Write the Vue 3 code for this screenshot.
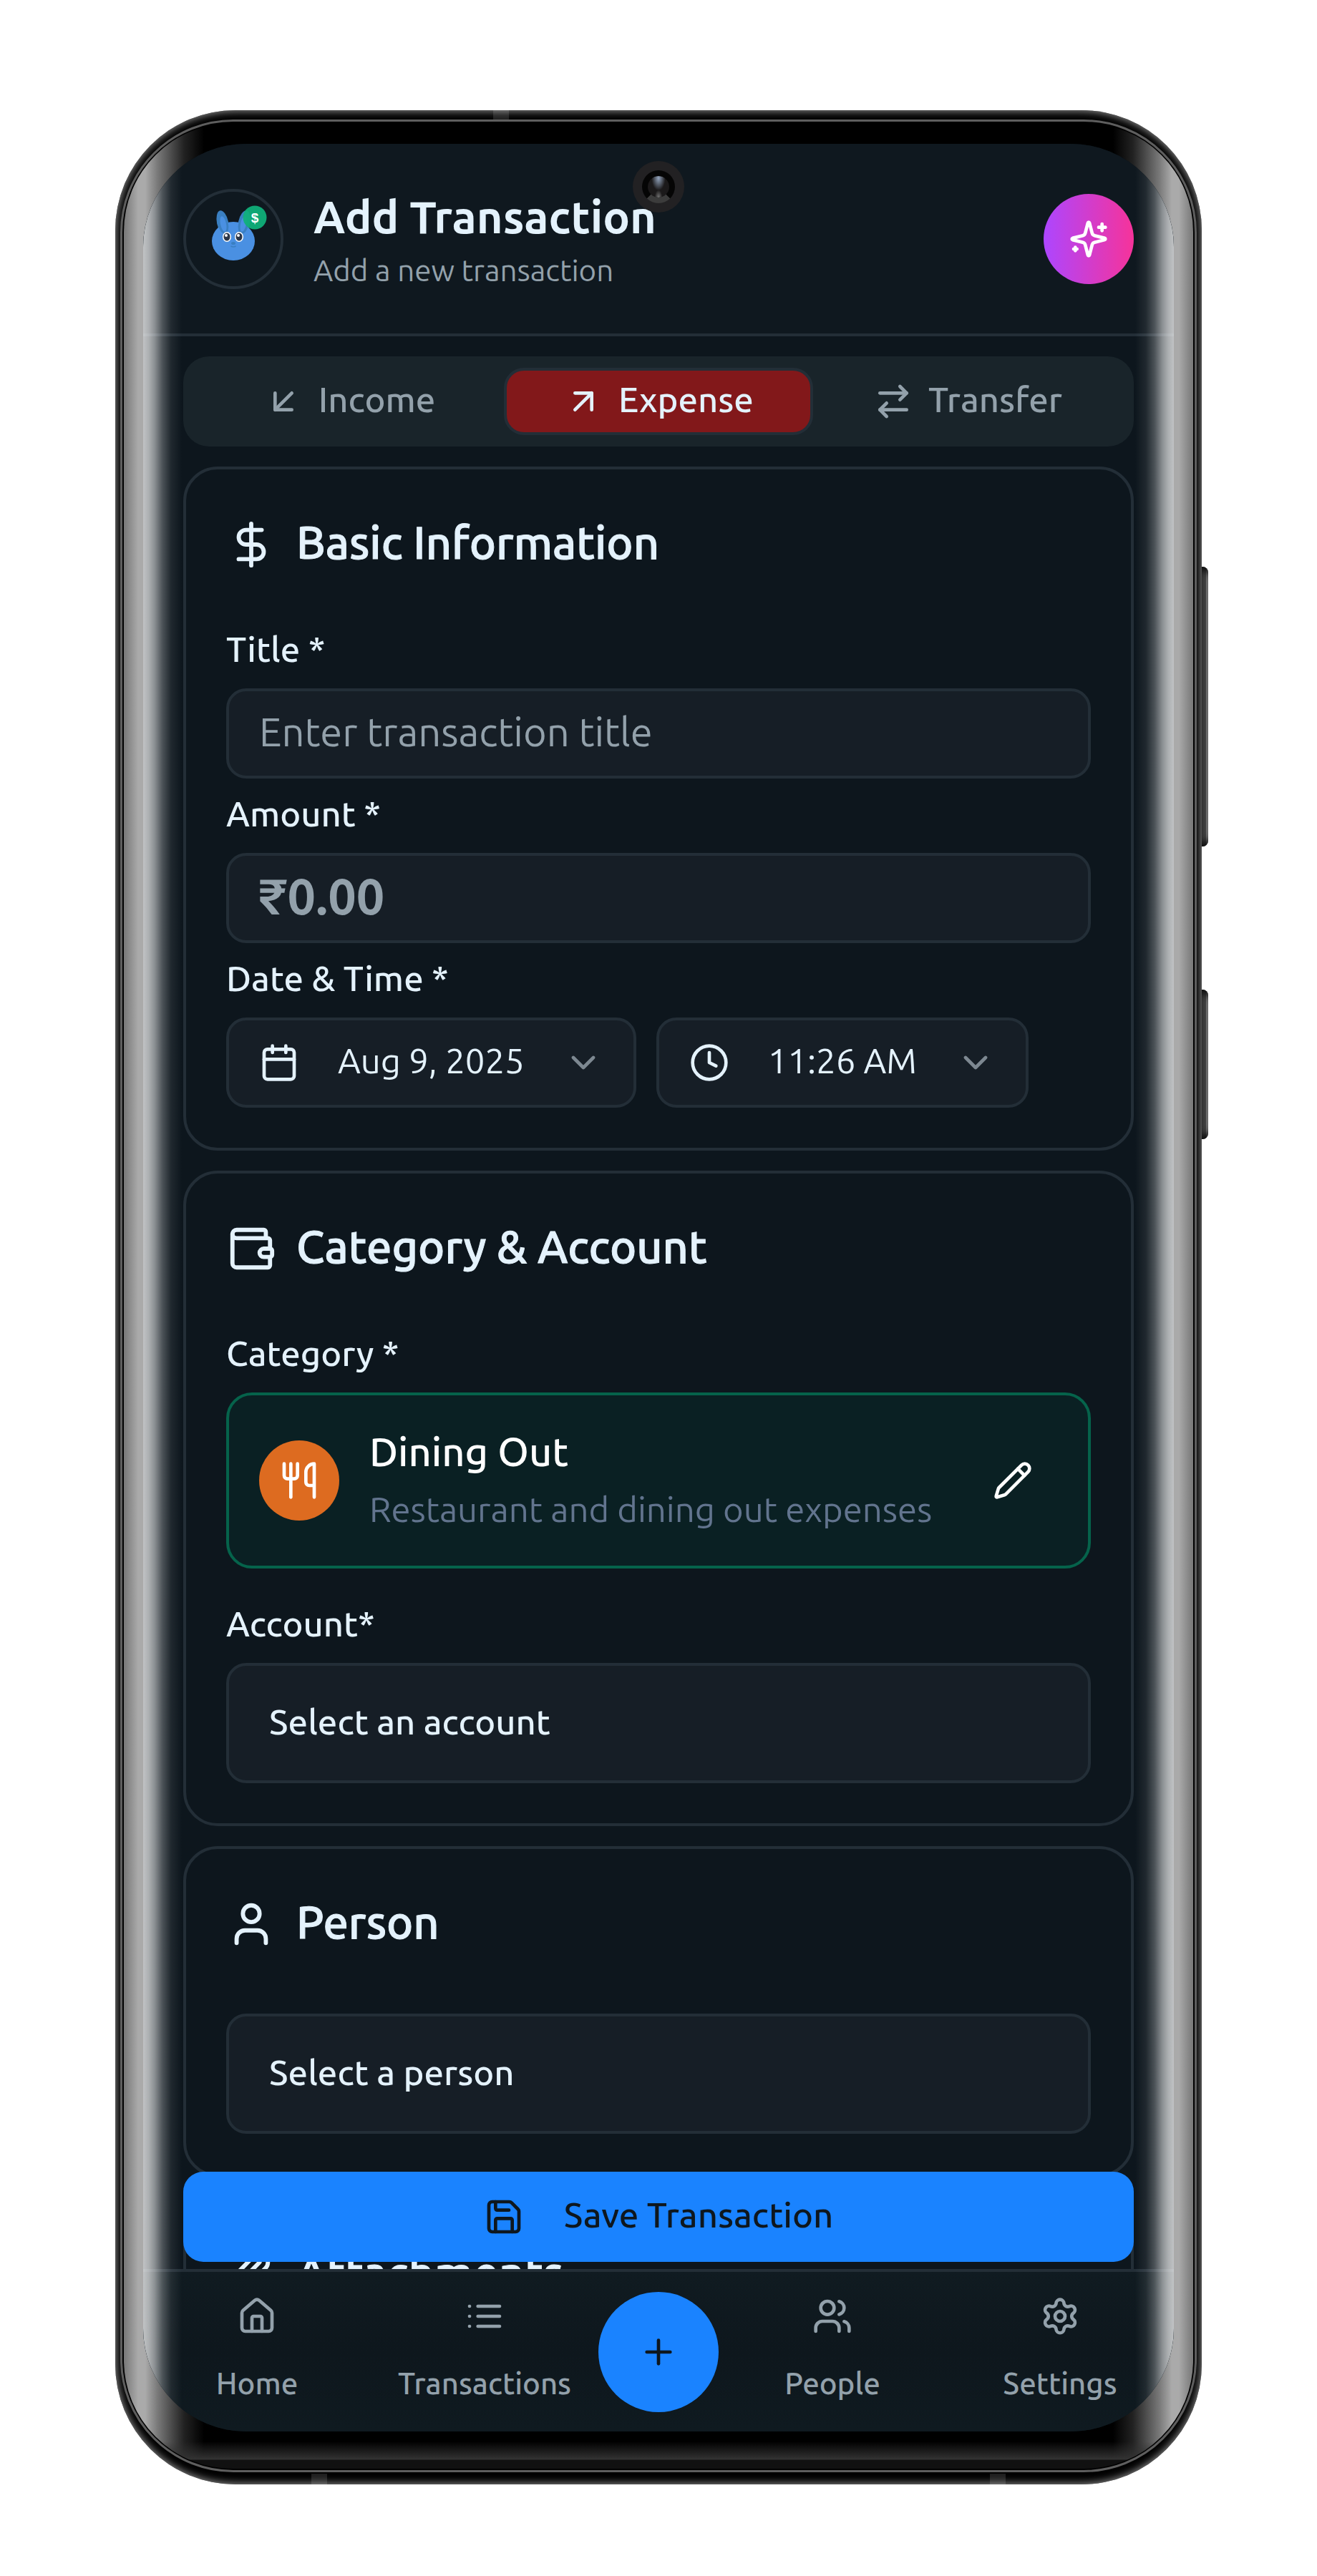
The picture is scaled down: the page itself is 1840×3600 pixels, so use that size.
<script setup>
import { h, ref } from 'vue'

const glyphs = {
  income: ['M17 7 7 17', 'M17 17H7V7'],
  expense: ['M7 7h10v10', 'M7 17 17 7'],
  transfer: ['m16 3 4 4-4 4', 'M20 7H4', 'm8 21-4-4 4-4', 'M4 17h16'],
  sparkles: [
    'M9.937 15.5A2 2 0 0 0 8.5 14.063l-6.135-1.582a.5.5 0 0 1 0-.962L8.5 9.936A2 2 0 0 0 9.937 8.5l1.582-6.135a.5.5 0 0 1 .963 0L14.063 8.5A2 2 0 0 0 15.5 9.937l6.135 1.581a.5.5 0 0 1 0 .964L15.5 14.063a2 2 0 0 0-1.437 1.437l-1.582 6.135a.5.5 0 0 1-.963 0z',
    'M20 3v4', 'M22 5h-4', 'M4 17v2', 'M5 18H3',
  ],
  dollar: ['M12 2v20', 'M17 5H9.5a3.5 3.5 0 0 0 0 7h5a3.5 3.5 0 0 1 0 7H6'],
  wallet: [
    'M19 7V4a1 1 0 0 0-1-1H5a2 2 0 0 0 0 4h15a1 1 0 0 1 1 1v4h-3a2 2 0 0 0 0 4h3a1 1 0 0 0 1-1v-2a1 1 0 0 0-1-1',
    'M3 5v14a2 2 0 0 0 2 2h15a1 1 0 0 0 1-1v-4',
  ],
  person: ['M19 21v-2a4 4 0 0 0-4-4H9a4 4 0 0 0-4 4v2', 'M16 7a4 4 0 1 1-8 0 4 4 0 0 1 8 0z'],
  paperclip: ['m16 6-8.414 8.586a2 2 0 0 0 2.829 2.829l8.414-8.586a4 4 0 1 0-5.657-5.657l-8.379 8.551a6 6 0 1 0 8.485 8.485l8.379-8.551'],
  calendar: ['M8 2v4', 'M16 2v4', 'M5 4h14a2 2 0 0 1 2 2v14a2 2 0 0 1-2 2H5a2 2 0 0 1-2-2V6a2 2 0 0 1 2-2z', 'M3 10h18'],
  clock: ['M22 12a10 10 0 1 1-20 0 10 10 0 0 1 20 0z', 'M12 6v6l4 2'],
  chevron: ['m6 9 6 6 6-6'],
  utensils: ['M3 2v7c0 1.1.9 2 2 2h4a2 2 0 0 0 2-2V2', 'M7 2v20', 'M21 15V2a5 5 0 0 0-5 5v6c0 1.1.9 2 2 2h3Zm0 0v7'],
  pencil: [
    'M21.174 6.812a1 1 0 0 0-3.986-3.987L3.842 16.174a2 2 0 0 0-.5.83l-1.321 4.352a.5.5 0 0 0 .623.622l4.353-1.32a2 2 0 0 0 .83-.497z',
    'm15 5 4 4',
  ],
  save: [
    'M15.2 3a2 2 0 0 1 1.4.6l3.8 3.8a2 2 0 0 1 .6 1.4V19a2 2 0 0 1-2 2H5a2 2 0 0 1-2-2V5a2 2 0 0 1 2-2z',
    'M17 21v-7a1 1 0 0 0-1-1H8a1 1 0 0 0-1 1v7', 'M7 3v4a1 1 0 0 0 1 1h7',
  ],
  home: [
    'M15 21v-8a1 1 0 0 0-1-1h-4a1 1 0 0 0-1 1v8',
    'M3 10a2 2 0 0 1 .709-1.528l7-5.999a2 2 0 0 1 2.582 0l7 5.999A2 2 0 0 1 21 10v9a2 2 0 0 1-2 2H5a2 2 0 0 1-2-2z',
  ],
  list: ['M8 6h13', 'M8 12h13', 'M8 18h13', 'M3 6h.01', 'M3 12h.01', 'M3 18h.01'],
  plus: ['M5 12h14', 'M12 5v14'],
  people: [
    'M16 21v-2a4 4 0 0 0-4-4H6a4 4 0 0 0-4 4v2', 'M13 7a4 4 0 1 1-8 0 4 4 0 0 1 8 0z',
    'M22 21v-2a4 4 0 0 0-3-3.87', 'M16 3.13a4 4 0 0 1 0 7.75',
  ],
  settings: [
    'M9.671 4.136a2.34 2.34 0 0 1 4.659 0 2.34 2.34 0 0 0 3.319 1.915 2.34 2.34 0 0 1 2.33 4.033 2.34 2.34 0 0 0 0 3.831 2.34 2.34 0 0 1-2.33 4.033 2.34 2.34 0 0 0-3.319 1.915 2.34 2.34 0 0 1-4.659 0 2.34 2.34 0 0 0-3.32-1.915 2.34 2.34 0 0 1-2.33-4.033 2.34 2.34 0 0 0 0-3.831A2.34 2.34 0 0 1 6.35 6.051a2.34 2.34 0 0 0 3.319-1.915',
    'M15 12a3 3 0 1 1-6 0 3 3 0 0 1 6 0z',
  ],
}

const Icon = (props) =>
  h('svg', { viewBox: '0 0 24 24', fill: 'none', stroke: 'currentColor', 'stroke-width': 2,
    'stroke-linecap': 'round', 'stroke-linejoin': 'round', 'aria-hidden': 'true' },
  glyphs[props.name].map((d) => h('path', { d })))
Icon.props = ['name']

const kinds = [
  { id: 'income', label: 'Income' },
  { id: 'expense', label: 'Expense' },
  { id: 'transfer', label: 'Transfer' },
]
const kind = ref('expense')
const title = ref('')
const amount = ref('')
</script>

<template>
  <div class="page">
    <div class="phone">
      <span class="side volume"></span>
      <span class="side power"></span>
      <div class="rim">
        <span class="seam seam-top"></span>
        <span class="seam seam-left"></span>
        <span class="seam seam-right"></span>
        <div class="bezel">
          <div class="glass"></div>
        </div>
      </div>

      <div class="screen">
        <header class="top">
          <div class="avatar">
            <svg class="mascot" viewBox="4 4 132 132" aria-hidden="true">
              <g fill="#3a7fc1">
                <ellipse cx="55" cy="47" rx="8" ry="17" transform="rotate(-12 55 47)" />
                <ellipse cx="85" cy="47" rx="8" ry="17" transform="rotate(12 85 47)" />
              </g>
              <ellipse cx="70" cy="73" rx="30" ry="27" fill="#4a90e2" />
              <g fill="#3a7fc1">
                <ellipse cx="56" cy="50" rx="7" ry="13" transform="rotate(-12 56 50)" />
                <ellipse cx="84" cy="50" rx="7" ry="13" transform="rotate(12 84 50)" />
              </g>
              <g fill="#4a90e2">
                <ellipse cx="56" cy="49" rx="4" ry="11" transform="rotate(-12 56 49)" />
                <ellipse cx="84" cy="49" rx="4" ry="11" transform="rotate(12 84 49)" />
              </g>
              <g fill="#fff">
                <ellipse cx="61" cy="67" rx="6" ry="7" />
                <ellipse cx="78" cy="67" rx="6" ry="7" />
              </g>
              <g fill="#2d3748">
                <ellipse cx="61" cy="67" rx="4.500" ry="5.500" />
                <ellipse cx="78" cy="67" rx="4.500" ry="5.500" />
              </g>
              <g fill="#fff">
                <circle cx="60" cy="65" r="2" />
                <circle cx="77" cy="65" r="2" />
              </g>
              <ellipse cx="70" cy="76" rx="3" ry="2" fill="#3a7fc1" />
              <path d="M66.500 80q3.500 2 7 0" fill="none" stroke="#3a7fc1" stroke-width="1.500" />
              <circle cx="100" cy="40" r="16.500" fill="#10b07a" fill-opacity=".94" />
              <text class="coin" x="100" y="47" text-anchor="middle">$</text>
            </svg>
          </div>
          <div class="heading">
            <h1>Add Transaction</h1>
            <p>Add a new transaction</p>
          </div>
          <button class="ai" type="button" aria-label="Fill with AI"><Icon name="sparkles" /></button>
        </header>

        <main class="body">
          <div class="tabs" role="tablist">
            <button v-for="k in kinds" :key="k.id" type="button" role="tab" class="tab"
              :class="{ active: kind === k.id }" :aria-selected="kind === k.id" @click="kind = k.id">
              <Icon :name="k.id" /><span>{{ k.label }}</span>
            </button>
          </div>

          <section class="card">
            <h2><Icon name="dollar" /><span>Basic Information</span></h2>
            <div class="field">
              <label for="title">Title *</label>
              <input id="title" v-model="title" class="control" type="text" placeholder="Enter transaction title" />
            </div>
            <div class="field">
              <label for="amount">Amount *</label>
              <input id="amount" v-model="amount" class="control amount" type="text" inputmode="decimal" placeholder="₹0.00" />
            </div>
            <div class="field">
              <label for="date">Date &amp; Time *</label>
              <div class="when">
                <button id="date" type="button" class="control pick">
                  <Icon name="calendar" /><span>Aug 9, 2025</span><Icon name="chevron" class="dim" />
                </button>
                <button type="button" class="control pick" aria-label="Time, 11:26 AM">
                  <Icon name="clock" /><span>11:26 AM</span><Icon name="chevron" class="dim" />
                </button>
              </div>
            </div>
          </section>

          <section class="card spaced">
            <h2><Icon name="wallet" /><span>Category &amp; Account</span></h2>
            <div class="field">
              <label for="category">Category *</label>
              <div class="category">
                <span class="badge"><Icon name="utensils" /></span>
                <div class="category-text">
                  <strong>Dining Out</strong>
                  <span>Restaurant and dining out expenses</span>
                </div>
                <button id="category" class="edit" type="button" aria-label="Change category"><Icon name="pencil" /></button>
              </div>
            </div>
            <div class="field">
              <label for="account">Account*</label>
              <select id="account" class="control select"><option>Select an account</option></select>
            </div>
          </section>

          <section class="card">
            <h2><Icon name="person" /><span>Person</span></h2>
            <div class="field">
              <select class="control select" aria-label="Person"><option>Select a person</option></select>
            </div>
          </section>

          <section class="card">
            <h2><Icon name="paperclip" /><span>Attachments</span></h2>
          </section>

          <button class="submit" type="submit"><Icon name="save" /><span>Save Transaction</span></button>
        </main>

        <nav class="nav">
          <a href="#home"><Icon name="home" />Home</a>
          <a href="#transactions"><Icon name="list" />Transactions</a>
          <button class="add" type="button" aria-label="Add"><Icon name="plus" /></button>
          <a href="#people"><Icon name="people" />People</a>
          <a href="#settings"><Icon name="settings" />Settings</a>
        </nav>

        <div class="sheen"></div>
        <div class="camera"><span></span></div>
      </div>
    </div>
  </div>
</template>

<style>
body {
  margin: 0;
  background: #fff;
}
</style>

<style scoped>
.page {
  --ink: #e4f2fc;
  --muted: #93a1ab;
  --line: #232e37;
  --panel: #161e26;
  --ground: #0d161d;
  --blue: #1a83ff;
  box-sizing: border-box;
  min-height: 100vh;
  padding: 154px 0 128px;
  font-family: Ubuntu, "Noto Sans", sans-serif;
  color: var(--ink);
}
.page * {
  box-sizing: border-box;
}
button,
input,
select {
  font: inherit;
  color: inherit;
  margin: 0;
  border: 0;
  background: none;
}
svg {
  flex: none;
  width: 56px;
  height: 56px;
}

/* device */
.phone {
  position: relative;
  width: 83%;
  max-width: 1518px;
  margin: 0 auto;
  padding: 47px 39px 74px;
}
.side {
  position: absolute;
  left: 100%;
  width: 9px;
  border-radius: 0 8px 8px 0;
  background: linear-gradient(to right, #444 60%, #8a8a8a 75%);
  box-shadow: inset 0 10px 10px -4px #111, inset 0 -10px 10px -4px #111;
}
.volume {
  top: 638px;
  height: 391px;
}
.power {
  top: 1229px;
  height: 209px;
}
.rim {
  position: absolute;
  inset: 0;
  border-radius: 168px;
  background: #000;
  box-shadow: inset 0 0 12px 1px #9a9a9a;
}
.seam {
  position: absolute;
  width: 22px;
  height: 15px;
  background: rgb(255 255 255 / 12%);
}
.seam-top {
  top: 0;
  left: 528px;
}
.seam-left {
  bottom: 0;
  left: 274px;
}
.seam-right {
  bottom: 0;
  right: 274px;
}
.bezel {
  position: absolute;
  inset: 13px 7px 17px;
  border: 3px solid #5e5e5e;
  border-radius: 158px;
  background: #000;
  padding: 2px;
}
.glass {
  height: 100%;
  border-radius: 152px;
  background:
    linear-gradient(to top, #111 12px, #333 13px, transparent 38px),
    linear-gradient(to right, #777, #aaa 20px, #aaa 30px, #777 48px, #222 84px, transparent 112px),
    linear-gradient(to left, #777, #aaa 20px, #aaa 30px, #777 48px, #222 84px, transparent 112px);
}
.screen {
  position: relative;
  display: flex;
  flex-direction: column;
  aspect-ratio: 1440 / 3197;
  border-radius: 144px;
  overflow: hidden;
  background: var(--ground);
}
.sheen {
  position: absolute;
  inset: 0;
  pointer-events: none;
  --fade: rgb(255 255 255 / 74%), rgb(255 255 255 / 66%) 8px, rgb(255 255 255 / 52%) 16px,
    rgb(255 255 255 / 26%) 27px, rgb(255 255 255 / 8%) 39px, transparent 54px;
  background: linear-gradient(to right, var(--fade)), linear-gradient(to left, var(--fade));
}
.camera {
  position: absolute;
  top: 24px;
  left: 50%;
  display: grid;
  place-items: center;
  width: 72px;
  height: 72px;
  margin-left: -36px;
  border-radius: 50%;
  background: #222123;
}
.camera span {
  width: 46px;
  height: 46px;
  border: 8px solid #050505;
  border-bottom-color: #3c3c3c;
  border-radius: 50%;
  background:
    radial-gradient(ellipse at 50% 10%, #93a4bd, transparent 45%) padding-box,
    radial-gradient(ellipse at 50% 100%, #777, transparent 25%) padding-box,
    #1b191a;
}

/* header */
.top {
  display: flex;
  align-items: center;
  gap: 42px;
  padding: 63px 56px 62px;
  border-bottom: 4px solid var(--line);
  background: #0f181f;
}
.avatar {
  flex: none;
  width: 140px;
  height: 140px;
  border: 4px solid var(--line);
  border-radius: 50%;
}
.mascot {
  display: block;
  width: 100%;
  height: 100%;
}
.coin {
  font: bold 19px "Liberation Sans", sans-serif;
  fill: #fff;
}
.heading {
  flex: 1;
  margin: -5px 0;
}
h1,
h2,
p {
  margin: 0;
}
h1 {
  font-size: 63px;
  font-weight: 600;
  line-height: 88px;
}
.heading p {
  font-size: 42px;
  line-height: 62px;
  color: var(--muted);
}
.ai {
  display: grid;
  place-items: center;
  width: 126px;
  height: 126px;
  padding: 0;
  border-radius: 50%;
  background: linear-gradient(to right, #ad46ff, #f6339a);
  color: #fff;
}

/* form */
.body {
  position: relative;
  flex: 1;
  min-height: 0;
  overflow: hidden;
  display: flex;
  flex-direction: column;
  gap: 28px;
  padding: 28px 56px 0;
}
.body > * {
  flex: none;
}
.tabs {
  display: flex;
  height: 126px;
  padding: 16px;
  border-radius: 36px;
  background: #19242a;
}
.tab {
  flex: 1;
  display: flex;
  align-items: center;
  justify-content: center;
  gap: 21px;
  border: 4px solid transparent;
  border-radius: 28px;
  font-size: 49px;
  font-weight: 500;
  color: var(--muted);
}
.tab.active {
  border-color: var(--line);
  background: #82181a;
  color: var(--ink);
}
.tab span,
.pick span,
.submit span,
h2 span {
  padding-bottom: 8px;
}
.card {
  padding: 56px;
  border: 4px solid var(--line);
  border-radius: 48px;
}
h2 {
  display: flex;
  align-items: center;
  gap: 28px;
  height: 98px;
  margin-bottom: 76px;
  font-size: 63px;
  font-weight: 500;
  -webkit-text-stroke: 1px var(--ink);
}
h2 svg {
  width: 70px;
  height: 70px;
}
.field + .field {
  margin-top: 28px;
}
.spaced .field + .field {
  margin-top: 56px;
}
label {
  display: block;
  margin-bottom: 34px;
  font-size: 49px;
  font-weight: 500;
  line-height: 42px;
}
.control {
  display: block;
  width: 100%;
  height: 126px;
  padding: 0 42px 6px;
  border: 4px solid var(--line);
  border-radius: 28px;
  background: var(--panel);
  font-size: 56px;
}
.control::placeholder {
  color: var(--muted);
  opacity: 1;
}
.amount {
  font-size: 70px;
  font-weight: 600;
}
.when {
  display: flex;
  gap: 28px;
}
.pick {
  display: flex;
  align-items: center;
  gap: 54px;
  width: auto;
  padding: 0 42px;
  font-size: 49px;
  white-space: nowrap;
}
.dim {
  opacity: .5;
}
.select {
  height: 168px;
  padding: 0 56px 6px;
  appearance: none;
  font-size: 49px;
  font-weight: 500;
}
.category {
  display: flex;
  align-items: center;
  gap: 42px;
  height: 246px;
  padding: 0 42px;
  border: 4px solid #05634b;
  border-radius: 36px;
  background: #0a2023;
  color: #fff;
}
.badge {
  flex: none;
  display: grid;
  place-items: center;
  width: 112px;
  height: 112px;
  border-radius: 50%;
  background: #dd6b20;
}
.category-text {
  flex: 1;
  display: grid;
  padding-bottom: 4px;
}
.category-text strong {
  font-size: 56px;
  font-weight: 500;
  line-height: 84px;
}
.category-text span {
  font-size: 49px;
  line-height: 76px;
  color: #62748e;
  white-space: nowrap;
}
.edit {
  flex: none;
  display: grid;
  place-items: center;
  width: 126px;
  height: 126px;
  margin-left: -42px;
  padding: 0;
}
.submit {
  position: absolute;
  right: 56px;
  bottom: 10px;
  left: 56px;
  display: flex;
  align-items: center;
  justify-content: center;
  gap: 56px;
  height: 126px;
  border-radius: 28px;
  background: var(--blue);
  color: #0e171e;
  font-size: 49px;
  font-weight: 500;
}

/* bottom navigation */
.nav {
  display: grid;
  grid-template-columns: 1fr 1fr 168px 1fr 1fr;
  justify-items: center;
  height: 227px;
  padding-top: 28px;
  border-top: 4px solid var(--line);
  background: linear-gradient(#101b21, #0e171d 50%, #0f1a20);
}
.nav a {
  display: flex;
  flex-direction: column;
  align-items: center;
  gap: 38px;
  padding-top: 6px;
  font-size: 42px;
  font-weight: 500;
  line-height: 56px;
  color: var(--muted);
  text-decoration: none;
}
.add {
  display: grid;
  place-items: center;
  width: 168px;
  height: 168px;
  padding: 0;
  border-radius: 50%;
  background: var(--blue);
  color: #0e171e;
}
</style>
